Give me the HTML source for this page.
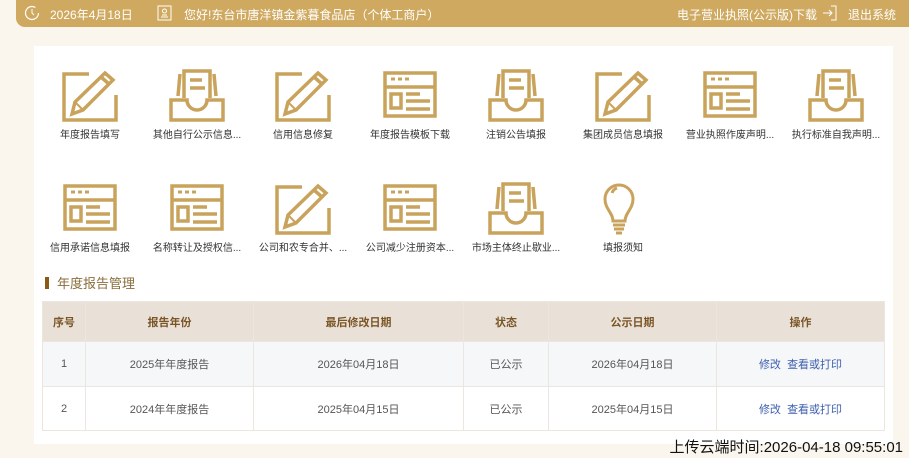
<!DOCTYPE html>
<html><head><meta charset="utf-8">
<style>
*{margin:0;padding:0;box-sizing:border-box}
body{width:909px;height:458px;background:#faf6ee;font-family:"Liberation Sans","Noto Sans CJK SC",sans-serif;position:relative;overflow:hidden}
.top{position:absolute;left:16px;top:0;width:893px;height:27px;background:#cfa95f;border-bottom-left-radius:9px;color:#fff;font-size:12px}
.top span{position:absolute;top:6px;white-space:nowrap}
.panel{position:absolute;left:34px;top:46px;width:859px;height:398px;background:#fff}
.ic{position:absolute;width:100px;text-align:center;font-size:10px;color:#333;white-space:nowrap}
.ic svg{display:block;margin:0 auto}
.ic div{margin-top:4px}
.title{position:absolute;left:45px;top:273px;font-size:13px;color:#8a6d3b}
.title i{display:inline-block;width:4px;height:12px;background:#8b5a14;margin-right:8px;vertical-align:-1px}
table{position:absolute;left:42px;top:301px;width:843px;border-collapse:collapse;font-size:11px;color:#555}
td,th{border:1px solid #ebe6df;text-align:center}
th{background:#e9e1d8;height:40px;color:#7a5526;font-weight:bold}
tr.r1 td{background:#f5f7f9;height:45px}
tr.r2 td{background:#fff;height:44px}
a{color:#3e5fae;text-decoration:none}
.foot{position:absolute;right:6px;top:436px;font-size:15px;color:#111}
</style></head><body>
<div class="top">
<svg style="position:absolute;left:8px;top:5px" width="16" height="16" viewBox="0 0 16 16"><circle cx="8" cy="8" r="6.5" fill="none" stroke="#fff" stroke-width="1.2" stroke-dasharray="34 7"/><path d="M8 4V8L10 10" stroke="#fff" fill="none"/></svg>
<span style="left:34px">2026年4月18日</span>
<svg style="position:absolute;left:141px;top:5px" width="15" height="16" viewBox="0 0 15 16"><rect x="1" y="1" width="13" height="14" fill="none" stroke="#fff"/><circle cx="7.5" cy="6" r="2" fill="none" stroke="#fff"/><path d="M4 12H11M5 10H10" stroke="#fff"/></svg>
<span style="left:168px">您好!东台市唐洋镇金紫暮食品店（个体工商户）</span>
<span style="left:661px">电子营业执照(公示版)下载</span>
<svg style="position:absolute;left:806px;top:5px" width="16" height="16" viewBox="0 0 16 16"><path d="M9 1H14V15H9" fill="none" stroke="#fff"/><path d="M1 8H10M7 5L10 8L7 11" fill="none" stroke="#fff"/></svg>
<span style="left:832px">退出系统</span>
</div>
<div class="panel"></div>

<svg width="0" height="0" style="position:absolute">
<defs>
<g id="edit" fill="none" stroke="#c9a35c" stroke-width="3.5"><path d="M27 6H2V52H54V27"/><path d="M10 46L13 34L43 5L51 12L21 42Z"/><path d="M39 9L47 16"/><path d="M13 34L21 42" stroke-width="2"/></g>
<g id="tray" fill="none" stroke="#c9a35c" stroke-width="3.5"><path d="M15 30V3H41V30"/><path d="M21 12H33M21 20H36"/><path d="M9 28L11 6M47 28L45 6"/><path d="M2 52V32H18A10 10 0 0 0 38 32H54V52Z"/></g>
<g id="win" fill="none" stroke="#c9a35c" stroke-width="3.5"><rect x="3" y="5" width="50" height="43"/><path d="M3 19H53"/><path d="M9 11H13M16 11H20M23 11H27" stroke-width="3"/><rect x="9" y="26" width="10" height="14"/><path d="M24 26H38M24 33H48M24 41H48"/></g>
<g id="bulb" fill="none" stroke="#c9a35c" stroke-width="3"><path d="M18 40C18 32 10 28 10 18A14 14 0 0 1 38 18C38 28 30 32 30 40Z"/><path d="M17 12A8 8 0 0 1 22 7"/><path d="M18 44H30M19 48H29M21 52H27"/></g>
</defs></svg>

<div class="ic" style="left:40px;top:68px"><svg width="56" height="54"><use href="#edit"/></svg><div>年度报告填写</div></div>
<div class="ic" style="left:147px;top:68px"><svg width="56" height="54"><use href="#tray"/></svg><div>其他自行公示信息...</div></div>
<div class="ic" style="left:253px;top:68px"><svg width="56" height="54"><use href="#edit"/></svg><div>信用信息修复</div></div>
<div class="ic" style="left:360px;top:68px"><svg width="56" height="54"><use href="#win"/></svg><div>年度报告模板下载</div></div>
<div class="ic" style="left:466px;top:68px"><svg width="56" height="54"><use href="#tray"/></svg><div>注销公告填报</div></div>
<div class="ic" style="left:573px;top:68px"><svg width="56" height="54"><use href="#edit"/></svg><div>集团成员信息填报</div></div>
<div class="ic" style="left:680px;top:68px"><svg width="56" height="54"><use href="#win"/></svg><div>营业执照作废声明...</div></div>
<div class="ic" style="left:786px;top:68px"><svg width="56" height="54"><use href="#tray"/></svg><div>执行标准自我声明...</div></div>

<div class="ic" style="left:40px;top:181px"><svg width="56" height="54"><use href="#win"/></svg><div>信用承诺信息填报</div></div>
<div class="ic" style="left:147px;top:181px"><svg width="56" height="54"><use href="#win"/></svg><div>名称转让及授权信...</div></div>
<div class="ic" style="left:253px;top:181px"><svg width="56" height="54"><use href="#edit"/></svg><div>公司和农专合并、...</div></div>
<div class="ic" style="left:360px;top:181px"><svg width="56" height="54"><use href="#win"/></svg><div>公司减少注册资本...</div></div>
<div class="ic" style="left:466px;top:181px"><svg width="56" height="54"><use href="#tray"/></svg><div>市场主体终止歇业...</div></div>
<div class="ic" style="left:573px;top:181px"><svg width="56" height="54"><use href="#bulb"/></svg><div>填报须知</div></div>

<div class="title"><i></i>年度报告管理</div>
<table>
<tr><th style="width:43px">序号</th><th style="width:168px">报告年份</th><th style="width:210px">最后修改日期</th><th style="width:85px">状态</th><th style="width:168px">公示日期</th><th>操作</th></tr>
<tr class="r1"><td>1</td><td>2025年年度报告</td><td>2026年04月18日</td><td>已公示</td><td>2026年04月18日</td><td><a>修改</a>&nbsp; <a>查看或打印</a></td></tr>
<tr class="r2"><td>2</td><td>2024年年度报告</td><td>2025年04月15日</td><td>已公示</td><td>2025年04月15日</td><td><a>修改</a>&nbsp; <a>查看或打印</a></td></tr>
</table>
<div class="foot">上传云端时间:2026-04-18 09:55:01</div>
</body></html>
